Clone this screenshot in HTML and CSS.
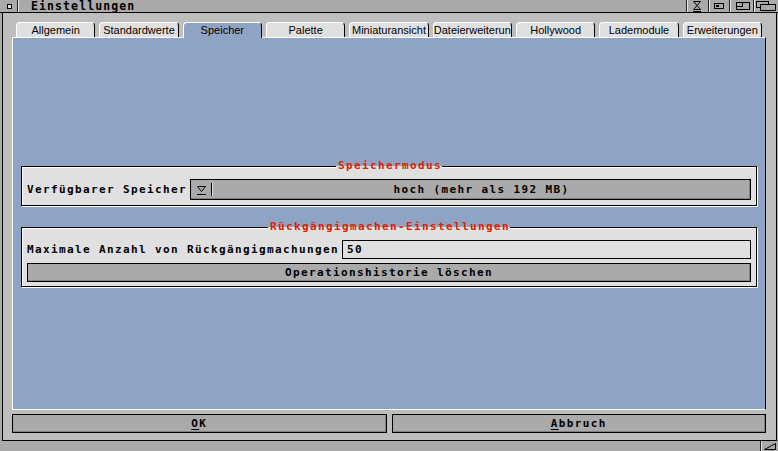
FILE: index.html
```html
<!DOCTYPE html>
<html lang="de">
<head>
    <meta charset="UTF-8">
    <title>Einstellungen</title>
    <link rel="stylesheet" href="styles.css">
</head>
<body>
    <div class="window">
        <div class="titlebar">
            <div class="gadget close">
                <svg width="17" height="12"><rect x="7.5" y="4.5" width="4" height="4" fill="#e0e0e0" stroke="#000"/></svg>
            </div>
            <div class="title">Einstellungen</div>
            <div class="gadget g-snap">
                <svg width="21" height="12"><path d="M6.5 1.5 H13.5 L10 5.5 L13.5 9.5 H6.5 L10 5.5 Z" fill="none" stroke="#000"/><path d="M6 11.5 H14" stroke="#000"/></svg>
            </div>
            <div class="gadget g-icon">
                <svg width="20" height="12"><rect x="5.5" y="3.5" width="9" height="5" fill="none" stroke="#000"/><rect x="7" y="5" width="3" height="2" fill="#000"/></svg>
            </div>
            <div class="gadget g-zoom">
                <svg width="23" height="12"><rect x="6.5" y="2.5" width="13" height="7" fill="none" stroke="#000"/><rect x="6.5" y="2.5" width="6" height="4" fill="none" stroke="#000"/></svg>
            </div>
            <div class="gadget g-depth">
                <svg width="24" height="12"><rect x="2.5" y="1.5" width="12" height="6" fill="none" stroke="#000"/><rect x="6.5" y="4.5" width="15" height="6" fill="#aaa" stroke="#000"/></svg>
            </div>
        </div>

        <div class="main">
            <div class="tabs">
                <div class="tab">Allgemein</div>
                <div class="tab">Standardwerte</div>
                <div class="tab active">Speicher</div>
                <div class="tab">Palette</div>
                <div class="tab">Miniaturansicht</div>
                <div class="tab">Dateierweiterun</div>
                <div class="tab">Hollywood</div>
                <div class="tab">Lademodule</div>
                <div class="tab">Erweiterungen</div>
            </div>

            <div class="panel">
                <div class="group group-mode">
                    <div class="group-title">Speichermodus</div>
                    <div class="row">
                        <span class="label">Verfügbarer Speicher</span>
                        <div class="cycle">
                            <span class="cycle-icon">
                                <svg width="9" height="9"><path d="M0.5 0.5 H8.5 L4.5 5.5 Z" fill="none" stroke="#000"/><path d="M0 8.5 H9" stroke="#000"/></svg>
                            </span>
                            <span class="cycle-sep"></span>
                            <span class="cycle-text">hoch (mehr als 192 MB)</span>
                        </div>
                    </div>
                </div>

                <div class="group group-undo">
                    <div class="group-title">Rückgängigmachen-Einstellungen</div>
                    <div class="row">
                        <span class="label">Maximale Anzahl von Rückgängigmachungen</span>
                        <div class="string">50</div>
                    </div>
                    <div class="button">Operationshistorie löschen</div>
                </div>
            </div>

            <div class="buttons">
                <div class="button"><u>O</u>K</div>
                <div class="button"><u>A</u>bbruch</div>
            </div>
        </div>

        <div class="bottombar">
            <div class="sizer">
                <svg width="17" height="10"><path d="M3.5 8.5 L14.5 2.5 V8.5 Z" fill="none" stroke="#000"/></svg>
            </div>
        </div>
    </div>
</body>
</html>
```

FILE: styles.css
```css
body {
    margin: 0;
    background: #aaa;
}
.window {
    width: 778px;
    height: 451px;
    display: flex;
    flex-direction: column;
    background: #aaa;
    font-family: 'DejaVu Sans Mono', 'Liberation Mono', monospace;
    font-weight: bold;
    font-size: 11px;
    letter-spacing: 1.38px;
    color: #000;
}

/* title bar */
.titlebar {
    height: 12px;
    border-bottom: 1px solid #000;
    display: flex;
}
.gadget {
    height: 12px;
    border-left: 1px solid #222;
    box-shadow: inset 1px 0 0 #e8e8e8;
    display: flex;
}
.close {
    width: 17px;
    border-left: 0;
    border-right: 1px solid #222;
    box-shadow: 1px 0 0 #e8e8e8;
}
.title {
    flex: 1;
    padding-left: 13px;
    line-height: 12px;
    font-size: 11.5px;
    letter-spacing: 1.1px;
}
.g-snap { width: 21px; }
.g-icon { width: 20px; }
.g-zoom { width: 23px; }
.g-depth { width: 24px; }

/* window body */
.main {
    flex: 1;
    margin: 0 1px 0 2px;
    border: 1px solid #000;
    border-top: 0;
    background: #bebebe;
    padding: 9px 10px 7px 9px;
    display: flex;
    flex-direction: column;
}
.tabs {
    display: flex;
    align-items: flex-end;
    gap: 4px;
    height: 15px;
    margin: 0 4px;
    font-family: 'Liberation Sans', Arial, sans-serif;
    font-weight: normal;
    font-size: 11px;
    letter-spacing: 0;
}
.tab {
    flex: 1;
    min-width: 0;
    height: 14px;
    line-height: 14px;
    text-align: center;
    white-space: nowrap;
    overflow: hidden;
    background: #e0e0e0;
    border: 1px solid #fff;
    border-bottom: 0;
    border-right-color: #000;
    border-radius: 4px 4px 0 0;
}
.tab.active {
    height: 15px;
    margin-bottom: -1px;
    background: #8fa4c4;
    position: relative;
    z-index: 1;
}
.panel {
    flex: 1;
    background: #8fa4c4;
    border: 1px solid #fff;
    border-right-color: #000;
    padding: 128px 8px 0 8px;
}

/* groups */
.group {
    background: #e0e0e0;
    border: 1px solid #000;
    box-shadow: 1px 1px 0 #fff, inset 1px 1px 0 #fff;
    padding: 0 5px 5px 5px;
}
.group-undo {
    margin-top: 21px;
    padding-bottom: 4px;
}
.group-title {
    display: table;
    margin: -7px auto 0;
    padding: 0 0 0 2px;
    line-height: 12px;
    color: #e02000;
    background: linear-gradient(to bottom, #8fa4c4 6px, #e0e0e0 6px);
}
.row {
    display: flex;
    align-items: center;
    gap: 3px;
    margin-top: 7px;
}
.label {
    white-space: nowrap;
}
.cycle {
    flex: 1;
    height: 19px;
    border: 1px solid #000;
    background: #aaa;
    box-shadow: inset -1px -1px 0 #808080;
    display: flex;
    align-items: center;
}
.cycle-icon {
    display: flex;
    padding: 1px 0 0 6px;
    width: 9px;
}
.cycle-sep {
    height: 13px;
    margin-left: 5px;
    border-left: 1px solid #000;
    border-right: 1px solid #e0e0e0;
}
.cycle-text {
    flex: 1;
    text-align: center;
}
.string {
    flex: 1;
    height: 17px;
    line-height: 17px;
    padding-left: 4px;
    border: 1px solid #000;
    background: #e0e0e0;
}
.button {
    height: 17px;
    line-height: 17px;
    text-align: center;
    border: 1px solid #000;
    background: #aaa;
    box-shadow: inset -1px -1px 0 #808080;
}
.group .button {
    margin-top: 4px;
}
.button u {
    text-decoration-thickness: 1px;
    text-underline-offset: 2px;
}
.buttons {
    display: flex;
    gap: 5px;
    margin-top: 4px;
}
.buttons .button {
    flex: 1;
}

/* bottom border */
.bottombar {
    height: 10px;
    display: flex;
    justify-content: flex-end;
}
.sizer {
    width: 17px;
    border-left: 1px solid #222;
    box-shadow: inset 1px 0 0 #e8e8e8;
}
```
